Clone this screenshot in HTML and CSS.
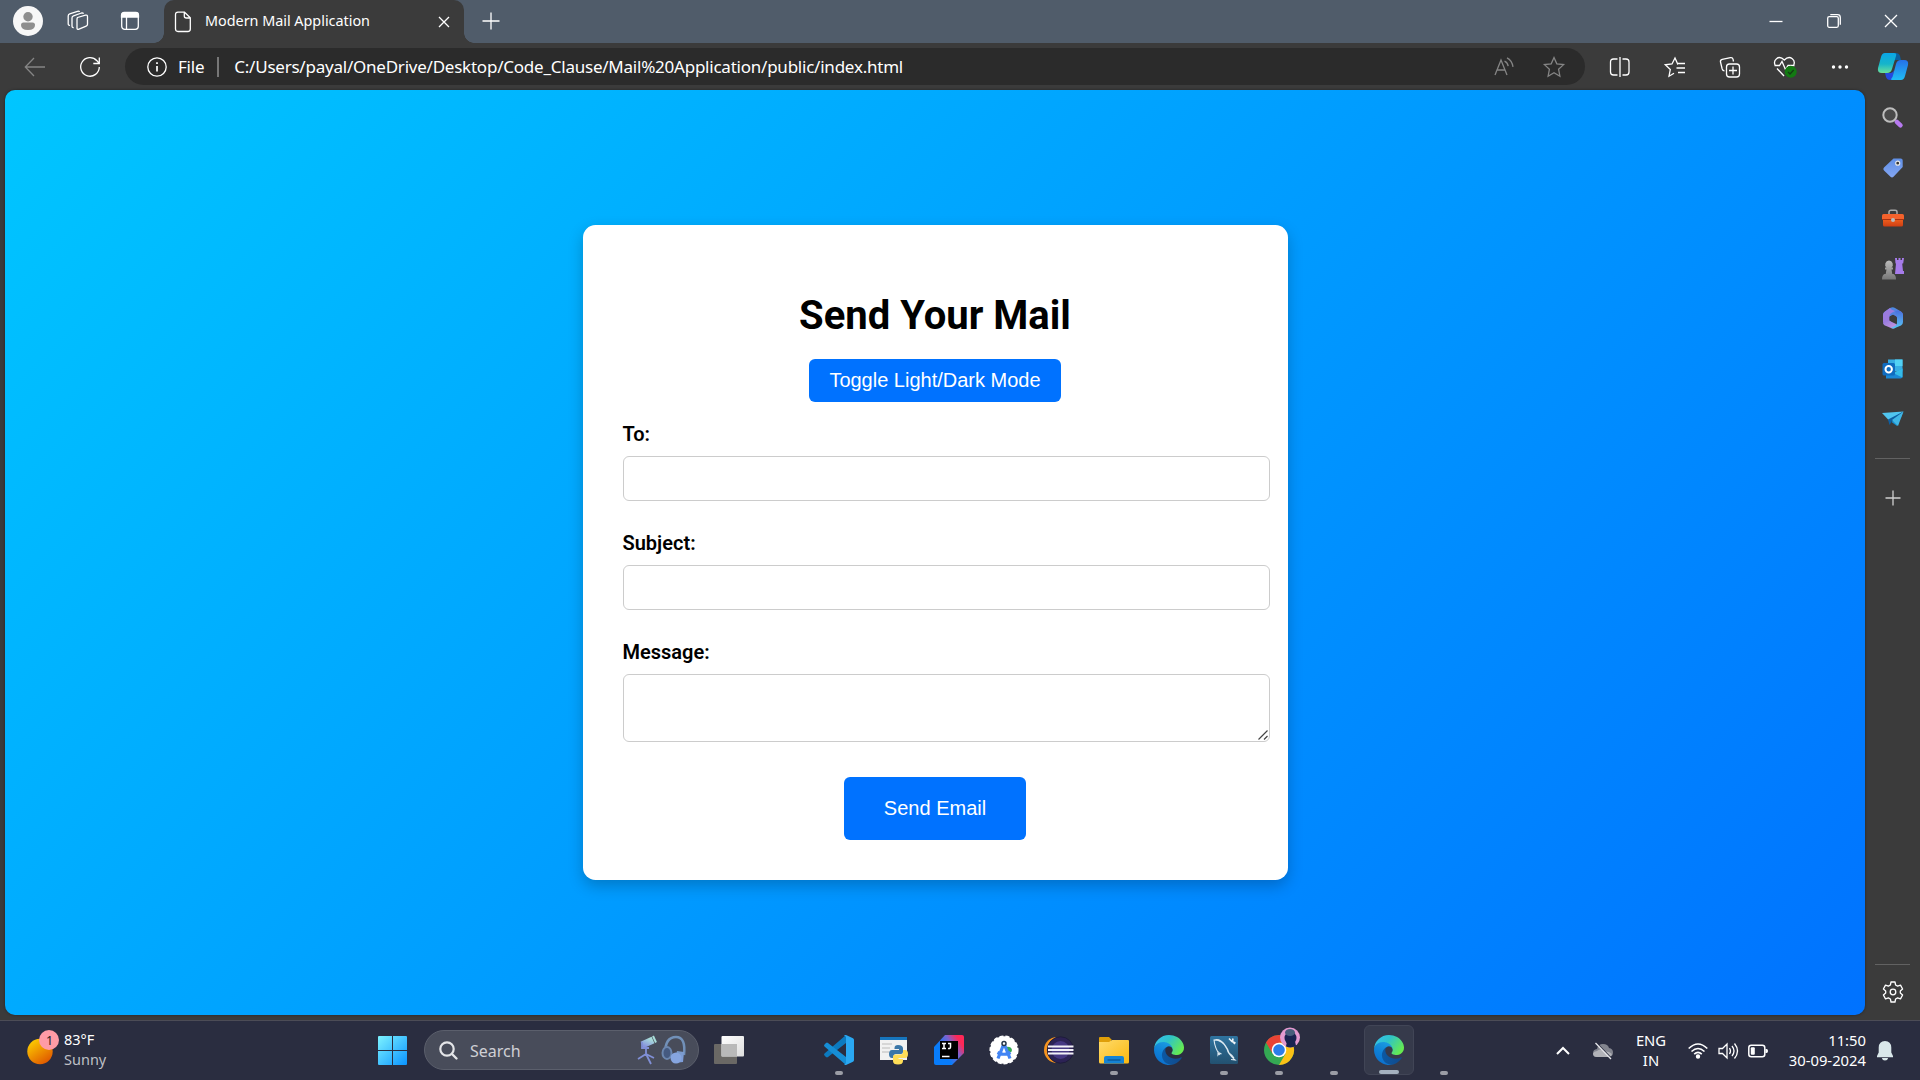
FILE: index.html
```html
<!DOCTYPE html>
<html lang="en">
<head>
<meta charset="utf-8">
<title>Modern Mail Application</title>
<link rel="stylesheet" href="styles.css">
</head>
<body>
<svg class="defs" width="0" height="0" aria-hidden="true">
  <defs>
    <linearGradient id="edgeA" x1="0" y1="0" x2="1" y2="0"><stop offset="0" stop-color="#0c59a4"/><stop offset="1" stop-color="#114a8b"/></linearGradient>
    <linearGradient id="edgeB" x1=".6" y1="0" x2=".2" y2="1"><stop offset="0" stop-color="#1b9de2"/><stop offset=".5" stop-color="#0f80d6"/><stop offset="1" stop-color="#0b6ccb"/></linearGradient>
    <linearGradient id="edgeC" x1="0" y1=".1" x2="1" y2=".6"><stop offset="0" stop-color="#35c1f1"/><stop offset=".45" stop-color="#2fc3c8"/><stop offset="1" stop-color="#66eb4f"/></linearGradient>
    <linearGradient id="win" x1="0" y1="0" x2="1" y2="1"><stop offset="0" stop-color="#7df3ff"/><stop offset="1" stop-color="#0a93ff"/></linearGradient>
    <linearGradient id="sun" x1=".1" y1="0" x2=".8" y2="1"><stop offset="0" stop-color="#ffd500"/><stop offset="1" stop-color="#de5200"/></linearGradient>
    <linearGradient id="idea" x1="0" y1=".75" x2="1" y2=".1"><stop offset=".3" stop-color="#087cfa"/><stop offset=".62" stop-color="#7a63d0"/><stop offset=".85" stop-color="#fe2857"/></linearGradient>
    <linearGradient id="folder" x1="0" y1="0" x2="1" y2="1"><stop offset="0" stop-color="#ffdb6b"/><stop offset="1" stop-color="#fbb80f"/></linearGradient>
    <linearGradient id="copA" x1="0" y1="0" x2="0" y2="1"><stop offset="0" stop-color="#0aa5e6"/><stop offset=".55" stop-color="#16b5ca"/><stop offset="1" stop-color="#6be09a"/></linearGradient>
    <linearGradient id="copB" x1="0" y1="0" x2="0" y2="1"><stop offset="0" stop-color="#2670e8"/><stop offset="1" stop-color="#20bdf5"/></linearGradient>
    <linearGradient id="m365" x1="0" y1="0" x2="1" y2="1"><stop offset="0" stop-color="#3f8fe0"/><stop offset="1" stop-color="#6a74e0"/></linearGradient>
    <linearGradient id="m365b" x1="0" y1="0" x2="1" y2="1"><stop offset="0" stop-color="#8f7ae0"/><stop offset="1" stop-color="#cf97dc"/></linearGradient>
    <linearGradient id="m365c" x1="0" y1="0" x2="0" y2="1"><stop offset="0" stop-color="#4a6fdd"/><stop offset="1" stop-color="#58c4f5"/></linearGradient>
    <linearGradient id="tag" x1="0" y1="0" x2="0" y2="1"><stop offset="0" stop-color="#5f8fe6"/><stop offset="1" stop-color="#84a6f2"/></linearGradient>
    <linearGradient id="box" x1="0" y1="0" x2="0" y2="1"><stop offset="0" stop-color="#f66a23"/><stop offset="1" stop-color="#cf3e12"/></linearGradient>
    <linearGradient id="pawn" x1="0" y1="0" x2="0" y2="1"><stop offset="0" stop-color="#bbb"/><stop offset="1" stop-color="#777"/></linearGradient>
    <linearGradient id="dolphin" x1="0" y1="0" x2="0" y2="1"><stop offset="0" stop-color="#2f74a0"/><stop offset="1" stop-color="#235170"/></linearGradient>
    <linearGradient id="paneFront" x1="0" y1="0" x2="1" y2="1"><stop offset="0" stop-color="#fff"/><stop offset="1" stop-color="#ddd"/></linearGradient>
    <linearGradient id="mic" x1="0" y1="1" x2="1" y2="0"><stop offset="0" stop-color="#8793dd"/><stop offset="1" stop-color="#a8ddd9"/></linearGradient>
    <linearGradient id="phones" x1="0" y1="0" x2="1" y2="1"><stop offset="0" stop-color="#7797bd"/><stop offset="1" stop-color="#7f9fe0"/></linearGradient>
    <symbol id="edge" viewBox="0 0 256 256">
      <path fill="url(#edgeA)" transform="translate(-4.6 -4.9)" d="M235.68 195.46a93.73 93.73 0 01-10.54 4.71 101.87 101.87 0 01-35.9 6.46c-47.32 0-88.54-32.55-88.54-74.32A31.48 31.48 0 01117.13 105c-42.8 1.8-53.8 46.4-53.8 72.53 0 73.88 68.09 81.37 82.76 81.37 7.91 0 19.84-2.3 27-4.56l1.31-.44a128.34 128.34 0 0066.6-52.8 4 4 0 00-5.32-5.64z"/>
      <path fill="url(#edgeB)" d="M105.73 241.42A79.2 79.2 0 0183 220.08a80.72 80.72 0 0129.53-120c3.12-1.47 8.45-4.13 15.54-4a32.35 32.35 0 0125.69 13 31.88 31.88 0 016.36 18.66c0-.21 24.46-79.6-80-79.6-43.9 0-80 41.66-80 78.21a130.15 130.15 0 0012.11 56 128 128 0 00156.38 67.11 75.55 75.55 0 01-62.78-8z"/>
      <path fill="url(#edgeC)" d="M152.33 148.86c-.81 1.05-3.3 2.5-3.3 5.66 0 2.61 1.7 5.12 4.72 7.23 14.38 10 41.49 8.68 41.56 8.68a59.56 59.56 0 0030.27-8.35A61.38 61.38 0 00256 109.06c.26-22.41-8-37.31-11.34-43.91C223.46 23.67 177.72 0 128 0A128 128 0 000 126.2c.48-36.54 36.8-66.05 80-66.05 3.5 0 23.46.34 42 10.07 16.34 8.58 24.9 18.94 30.85 29.21 6.18 10.67 7.28 24.15 7.28 29.52s-2.74 13.33-7.8 19.91z"/>
    </symbol>
  </defs>
</svg>

<div class="desktop">
  <header class="tabstrip">
    <span class="slot avatar"><svg width="30" height="30" viewBox="0 0 30 30"><circle cx="15" cy="15" r="15" fill="#f7f7f7"/><circle cx="15" cy="10.700" r="4.700" fill="#8e8e8e"/><path d="M8 19q0-2.500 2.500-2.500h9q2.500 0 2.500 2.500 0 5-7 5t-7-5z" fill="#8e8e8e"/></svg></span>
    <span class="slot spaces"><svg width="22" height="22" viewBox="0 0 22 22" class="line"><path d="M10.500 7.500l8-2.300q2-.5 2 1.500v7.600q0 1.400-1.300 1.900l-7.200 3q-2 .8-2-1.200v-8.300q0-1.700.5-2.200zM6.700 17.500q-1.700.3-1.700-1.500V8q0-1.700 1.500-2.200L14.500 3q1.500-.4 2 .8M3 15.300q-1.800.3-1.800-1.500V6q0-1.700 1.500-2.200L10.500 1.300q1.600-.5 2 .7"/></svg></span>
    <span class="slot actions"><svg width="20" height="20" viewBox="0 0 20 20" class="line"><rect x="1.700" y="1.700" width="16.600" height="16.600" rx="3"/><path d="M6.500 6v12"/><path d="M1.500 6V4.200Q1.500 1.500 4.200 1.500h11.600q2.700 0 2.700 2.700V6z" fill="#fff"/></svg></span>
    <div class="tab">
      <svg class="doc line" width="18" height="22" viewBox="0 0 18 22"><path d="M4 1.200h6.500l5.800 5.600V18q0 2.500-2.500 2.500H4q-2.500 0-2.500-2.500V3.700Q1.500 1.200 4 1.200zM10.300 1.200V5q0 2 2 2h4"/></svg>
      <span class="tab-title">Modern Mail Application</span>
      <svg class="line" width="12" height="12" viewBox="0 0 12 12"><path d="M1 1l10 10M11 1L1 11"/></svg>
    </div>
    <span class="slot newtab"><svg width="18" height="18" viewBox="0 0 18 18" class="line"><path d="M9 .5v17M.5 9h17"/></svg></span>
    <div class="window-buttons">
      <span><svg width="14" height="14" viewBox="0 0 14 14" class="line"><path d="M.5 7.500h13"/></svg></span>
      <span><svg width="14" height="14" viewBox="0 0 14 14" class="line"><rect x=".7" y="2.700" width="10.600" height="10.600" rx="1.500"/><path d="M3.300.7h7.200q2.800 0 2.800 2.800v7.200"/></svg></span>
      <span><svg width="14" height="14" viewBox="0 0 14 14" class="line"><path d="M1 1l12 12M13 1L1 13"/></svg></span>
    </div>
  </header>

  <nav class="toolbar">
    <span class="slot back"><svg width="22" height="20" viewBox="0 0 22 20" class="line dim"><path d="M21 10H1.500M10 1L1.300 10l8.700 9"/></svg></span>
    <span class="slot reload"><svg width="22" height="22" viewBox="0 0 22 22" class="line"><path d="M20.300 11a9.300 9.300 0 1 1-2.400-6.300L20 7.200M20.300 1.500v6h-6"/></svg></span>
    <div class="address">
      <svg class="line" width="20" height="20" viewBox="0 0 20 20"><circle cx="10" cy="10" r="9.200"/><path d="M10 9v5.500M10 5.300v1.700" stroke-width="1.700"/></svg>
      <span class="scheme">File</span>
      <span class="bar"></span>
      <span class="url">C:/Users/payal/OneDrive/Desktop/Code_Clause/Mail%20Application/public/index.html</span>
      <svg class="line dim read" width="20" height="20" viewBox="0 0 20 20"><path d="M1 18L7 3l6 15M3.200 13h7.600M10.500 4.200q3 1.200 3.700 5M13 .8q5 2.500 6 9"/></svg>
      <svg class="line dim" width="22" height="22" viewBox="0 0 22 22"><path d="M11 1.500l2.800 6.300 6.800.8-5 4.700 1.300 6.900L11 16.800l-5.900 3.400 1.300-6.900-5-4.700 6.800-.8z"/></svg>
    </div>
    <div class="tools">
      <span><svg width="22" height="22" viewBox="0 0 22 22" class="line"><path d="M8.500 3H4.500Q1.500 3 1.500 6v10q0 3 3 3h4M13.500 3h3.500q3 0 3 3v10q0 3-3 3h-3.500M11 1v20"/></svg></span>
      <span><svg width="22" height="22" viewBox="0 0 22 22" class="line"><path d="M14 8h-.3L11 2 8 8l-6.700.8 5 4.700L5 20.200l5-2.900M14 7.500h7M12.500 12h8.500M14 16.500h7"/></svg></span>
      <span><svg width="22" height="22" viewBox="0 0 22 22" class="line"><rect x="7.500" y="8" width="13" height="13" rx="3"/><path d="M14 10.500v8M10 14.500h8M14.500 5.500l-.5-2.300q-.5-2-2.500-1.600L3.200 3.400Q1 4 1.500 6l1.700 7q.5 1.800 2.300 1.800"/></svg></span>
      <span><svg width="24" height="22" viewBox="0 0 24 22" class="line"><path d="M1.500 9.500h5l2.500-4 3.500 8 2.500-4h6.500M2 9q-1.500-4 1.500-6.300Q7-.2 11.300 4q4.200-4.200 8-1.300 3 2.300 1.500 6.300M4 12.500l7 7.500"/><circle cx="17.700" cy="15.800" r="6" fill="#127a12" stroke="none"/><path d="M15 16l2 2 3.700-4" stroke="#143c14"/></svg></span>
      <span><svg width="18" height="6" viewBox="0 0 18 6" fill="#fff"><circle cx="2.500" cy="3" r="1.700"/><circle cx="9" cy="3" r="1.700"/><circle cx="15.500" cy="3" r="1.700"/></svg></span>
      <span class="copilot"><svg width="30" height="28" viewBox="0 0 30 28"><path d="M15 0h3q3 0 4 3l1 4h-5q-3 0-4 3z" fill="#0b5f9e"/><path d="M15 27h-3q-3 0-4-3l-1-4h5q3 0 4-3z" fill="#2449df"/><path d="M7 0h9q3 0 2 3l-4 13q-1 4-5 4H4q-5 0-4-5L3 4q1-4 4-4z" fill="url(#copA)"/><path d="M23 27h-9q-2 0 .5-3L18 11q1-4 5-4h3q5 0 4 5l-3 11q-1 4-4 4z" fill="url(#copB)"/></svg></span>
    </div>
  </nav>

  <div class="middle">
    <main class="page">
      <section class="card">
        <h1>Send Your Mail</h1>
        <button class="btn toggle" type="button">Toggle Light/Dark Mode</button>
        <form class="form">
          <label for="to">To:</label>
          <input id="to" type="text">
          <label for="subject">Subject:</label>
          <input id="subject" type="text">
          <label for="message">Message:</label>
          <div class="message">
            <textarea id="message"></textarea>
            <svg class="grip" width="10" height="10" viewBox="0 0 10 10"><path d="M.5 9.500l9-9M6 9.500L9.500 6" stroke="#444" stroke-width="1.200"/></svg>
          </div>
        </form>
        <button class="btn send" type="button">Send Email</button>
      </section>
    </main>
    <aside class="sidebar">
      <span><svg width="22" height="22" viewBox="0 0 22 22"><path d="M14.800 14.800l3.700 3.500" stroke="#b77af0" stroke-width="4.500" stroke-linecap="round"/><circle cx="8" cy="8" r="6.700" fill="#494949" stroke="#bdbdbd" stroke-width="2"/></svg></span>
      <span><svg width="22" height="22" viewBox="0 0 22 22"><path d="M11.500 1.500h7.200q2 0 2 2v6.500l-9.200 9.700q-1.500 1.500-3 0L2 13.500q-1.500-1.500 0-3z" fill="url(#tag)"/><circle cx="15.700" cy="6.200" r="2" fill="#333" stroke="#e8e8e8" stroke-width="1.200"/></svg></span>
      <span><svg width="22" height="22" viewBox="0 0 22 22"><path d="M7 7.500V5q0-1.700 2-1.700h4q2 0 2 1.700v2.500" fill="none" stroke="#aaa" stroke-width="1.500"/><rect x="1" y="10" width="20" height="9.500" rx="1.500" fill="url(#box)"/><rect y="7" width="22" height="6" rx="1.500" fill="#f4622c"/><path d="M0 12.500h22" stroke="#aa310e"/><circle cx="11" cy="13" r="2" fill="#bbb"/></svg></span>
      <span><svg width="22" height="22" viewBox="0 0 22 22"><path d="M13 0h2v2h1.500V0h2v2H20V0h2l-.8 5.500h-1L21 13h1v3h-9l1-10.500h-.5z" fill="#a67bea"/><path d="M7 2.500a4 4 0 0 1 2.500 7H11v2H9.500l.8 4.500h1.200q2.500 1 2.500 5.500H0Q0 17 2.500 16h1.200l.8-4.500H3v-2h1.500a4 4 0 0 1 2.500-7z" fill="url(#pawn)"/></svg></span>
      <span><svg width="22" height="22" viewBox="0 0 22 22"><g transform="translate(0 -1)"><path d="M8 1q3-1.600 5 0l6 3.500q2 1.200 2 3.500v6l-10-6-3.500 1.800L1 14V8q0-2.400 2-3.600z" fill="url(#m365)"/><path d="M8 1L3 4.400Q1 5.600 1 8v7q0 2.500 2 3.500l4.500-3V9q0-2 2-3L13 4Q9 3 8 1z" fill="#9b7bdf"/><path d="M3 18.500Q1.500 17.500 1.200 16l6.300-2.500 3.500 2 4 2L13 21q-2 1.200-4 0z" fill="url(#m365b)"/><path d="M21 8v7q0 2.500-2 3.600L13 21q-2 1-4-.2l4-1.800q2-1 2-3V9.500l-2-5 3-1 3 1.200Q21 6 21 8z" fill="url(#m365c)"/><path d="M11 7.700l3.300 1.900v3.800L11 15.300l-3.300-1.900V9.600z" fill="#3b3b3b"/></g></svg></span>
      <span><svg width="22" height="22" viewBox="0 0 22 22"><path d="M6 1.500h14.500v12H6z" fill="#37aee5"/><path d="M13 1.500h7.500V8H13z" fill="#52d2f5"/><path d="M4 20.500V12l8 3 8.500-4.500v8q0 2-2 2z" fill="#1a88d6"/><path d="M20.500 10.500v9L11 15z" fill="#35bce9"/><rect x=".5" y="5" width="12.500" height="12.500" rx="1.500" fill="#0f6cc0"/><circle cx="6.700" cy="11.200" r="3.200" fill="none" stroke="#fff" stroke-width="2"/></svg></span>
      <span><svg width="22" height="22" viewBox="0 0 22 22"><path d="M0 5l21.500-1.500L7 12.500z" fill="#50c5ef"/><path d="M21.500 3.500L15 18l-5.500-4z" fill="#168fd1"/><path d="M6 11.500L21.500 3.500 10 13l-2.500 4z" fill="#0d5fa3"/><path d="M10 12l11.500-8.500L16 18z" fill="#40b6e5"/></svg></span>
      <i class="rule"></i>
      <span class="plus"><svg width="16" height="16" viewBox="0 0 16 16" class="line soft"><path d="M8 .5v15M.5 8h15"/></svg></span>
      <i class="rule low"></i>
      <span class="gear"><svg width="22" height="22" viewBox="0 0 22 22" class="line" stroke-linejoin="round"><path d="M9 1h4l.6 3 2 1.100 2.900-1L20.600 8l-2.300 2v2l2.300 2-2.100 3.900-2.900-1-2 1.100L13 21H9l-.6-3-2-1.100-2.900 1L1.400 14l2.300-2v-2L1.400 8l2.100-3.900 2.900 1 2-1.100z"/><circle cx="11" cy="11" r="2.800"/></svg></span>
    </aside>
  </div>

  <footer class="taskbar">
    <div class="weather">
      <svg width="34" height="36" viewBox="0 0 34 36"><circle cx="13" cy="22.500" r="12.700" fill="url(#sun)"/><circle cx="22" cy="11" r="10" fill="#ff9ba6"/><text x="22.500" y="15.500" class="badge">1</text></svg>
      <div class="lines"><b>83°F</b><span>Sunny</span></div>
    </div>
    <svg class="start" width="29" height="29" viewBox="0 0 29 29"><path fill="url(#win)" d="M1 0h13v14H0V1q0-1 1-1zM15 0h13q1 0 1 1v13H15zM0 15h14v14H1q-1 0-1-1zM15 15h14v13q0 1-1 1H15z"/></svg>
    <div class="search">
      <svg width="19" height="19" viewBox="0 0 19 19"><circle cx="8" cy="8" r="6.700" fill="none" stroke="#e4e5e8" stroke-width="2.200"/><path d="M13 13l4.500 4.500" stroke="#e4e5e8" stroke-width="2.400" stroke-linecap="round"/></svg>
      <span>Search</span>
      <svg width="48" height="30" viewBox="0 0 48 30"><path d="M5 10L16 5" stroke="url(#mic)" stroke-width="7"/><path d="M16 1l3 6.500" stroke="#a8ddd9" stroke-width="2"/><path d="M5 7v6h7M9 12v9M9 19l-8 5M9 19l8 4M9 19l5 10" fill="none" stroke="#808fd6" stroke-width="1.800"/><path d="M28 19q0-17 11-17 10 0 8 18" fill="none" stroke="#7190b8" stroke-width="2.500"/><ellipse cx="30" cy="18" rx="4.500" ry="6" fill="#455a80" stroke="#6b86ae" stroke-width="2"/><path d="M40 16l7 1-1 10-9 1z" fill="url(#phones)"/><circle cx="39" cy="23" r="5.500" fill="#86a5df"/></svg>
    </div>
    <svg class="views" width="30" height="28" viewBox="0 0 30 28"><rect y="8" width="23" height="20" rx="1" fill="#6a6865"/><rect x="7.500" width="22.500" height="20.500" rx="1" fill="url(#paneFront)"/><path d="M7.500 8H23v12.500H7.500z" fill="#b9b9b9"/></svg>
    <div class="apps">
      <span class="app run"><svg width="30" height="30" viewBox="0 0 30 30"><path d="M22 0v8L4 22q-1 .8-2 0l-1.500-1.500q-1-1 0-2z" fill="#0c7abf"/><path d="M22 30v-8L4 8q-1-.8-2 0L.5 9.500q-1 1 0 2z" fill="#168ed6"/><path d="M22 0l7 3.200q1 .6 1 1.800v20q0 1.200-1 1.800L22 30q-1.500.3-2-1 1.500.5 2-1V2q-.5-1.500-2-1 .5-1.200 2-1z" fill="#2aa8f2"/></svg></span>
      <span class="app"><svg width="30" height="30" viewBox="0 0 30 30"><path d="M1 2h27v23H1z" fill="#f1f1f1"/><path d="M1 2h27v3H1z" fill="#1675bd"/><path d="M3 9h10M3 13h8M3 17h7" stroke="#bbb"/><path d="M19 10q5 0 5 3.500V17q0 2-2 2h-5q-2.500 0-2.500 2.500V23H13q-3 0-3-4t3-4h7v-1h-4.500v-1q0-3 3.500-3z" fill="#3b77a8"/><path d="M24 15h2q3 0 3 4t-3 4h-6.500v1h4.500v2q0 3.500-5 3.500t-5-3.500v-4q0-2.500 2.500-2.500h5q2.500 0 2.500-2.500z" fill="#ffde57"/></svg></span>
      <span class="app"><svg width="30" height="30" viewBox="0 0 30 30"><path d="M0 12L11 0h17q2 0 2 2v16L18 30H2q-2 0-2-2z" fill="url(#idea)"/><path d="M6 6h18v18H6z" fill="#000"/><path d="M8 8.500h4M10 8.500v5M8 13.500h4M14 8.500h2.500v3.500q0 2-2.500 1.500M8 21.500h7.500" fill="none" stroke="#fff" stroke-width="1.500"/></svg></span>
      <span class="app"><svg width="30" height="30" viewBox="0 0 30 30"><circle cx="15" cy="15" r="13.800" fill="#fff" stroke="#fff" stroke-width="1.500" stroke-dasharray="4 2"/><path d="M17 12q5-1 6 3 0 2-2 2.500l-2.500-.5z" fill="#34a853"/><path d="M15 8.500L9 23.500M15 8.500l6 15M8.500 17.500q6.500 3.500 13 0" fill="none" stroke="#4285f4" stroke-width="3.200"/><circle cx="15" cy="8.500" r="2" fill="#fff" stroke="#26374b" stroke-width="1.500"/></svg></span>
      <span class="app"><svg width="30" height="30" viewBox="0 0 30 30"><circle cx="13" cy="15" r="13" fill="#f7941e"/><circle cx="16.500" cy="15" r="13.200" fill="#2c2255" stroke="#1e1d3a"/><circle cx="16.500" cy="15" r="9" fill="#463783"/><path d="M4 11.500h25.500M4 15h25.500M4 18.500h25.500" stroke="#f3f1f8" stroke-width="2.100"/></svg></span>
      <span class="app run"><svg width="30" height="30" viewBox="0 0 30 30"><path d="M0 3q0-1 1-1h9l3 3h-1v7H0z" fill="#df9f09"/><path d="M0 7h10l3-2h16q1 0 1 1v21q0 1.500-1.500 1.500h-27Q0 28.500 0 27z" fill="url(#folder)"/><path d="M5 28.500V23q0-2 2-2h16q2 0 2 2v5.500z" fill="#1583d4"/><path d="M8.500 25h13" stroke="#0a5595" stroke-width="1.300"/></svg></span>
      <span class="app"><svg width="30" height="30"><use href="#edge"/></svg></span>
      <span class="app run"><svg width="30" height="30" viewBox="0 0 30 30"><rect x="1" y="1" width="28" height="28" rx="1.500" fill="url(#dolphin)"/><path d="M11 20q-5-6-6-15 9 0 13 9 1 5 8 11l-4-.5M5 5q6-2 11 5 3 4 4 8 4 3 5 5M9 16v4l1.500-2 2 1" fill="none" stroke="#dce9f1" stroke-width="1.100"/><path d="M20 3.500l3 3 3.500 1.500M24 3.500l-.5 3L26 9" fill="none" stroke="#eef4f8" stroke-width="1.600"/></svg></span>
      <span class="app run"><svg class="tall" width="38" height="38" viewBox="0 0 38 38"><circle cx="15" cy="23" r="15" fill="#34a853"/><path d="M2 15.500A15 15 0 0 1 28 15.500L15 16l-6.500 10.500z" fill="#ea4335"/><path d="M28 15.500A15 15 0 0 1 15 38l6.500-11.300L15 15.500z" fill="#fbc116"/><circle cx="15" cy="23" r="7.300" fill="#fff"/><circle cx="15" cy="23" r="5.800" fill="#2b7de9"/><circle cx="26" cy="10.500" r="10" fill="#e39ad0"/><ellipse cx="26.500" cy="11" rx="6" ry="6.500" fill="#1a2350"/><path d="M23 14h8l1 5q-5 2.500-10 .500z" fill="#1a2350"/><ellipse cx="26" cy="5.500" rx="5" ry="3.500" fill="#485e7c"/></svg></span>
      <span class="app run"></span>
      <span class="app active"><svg width="30" height="30"><use href="#edge"/></svg></span>
      <span class="app run"></span>
    </div>
    <div class="tray">
      <span class="t-chev"><svg width="14" height="9" viewBox="0 0 14 9"><path d="M1 8l6-6 6 6" fill="none" stroke="#fff" stroke-width="2"/></svg></span>
      <span class="t-cloud"><svg width="22" height="18" viewBox="0 0 22 18"><path d="M5 15q-4 0-4-4 0-3.500 4-4 1-5 6-5 5 0 6 4 4 .5 4 4.500T17 15z" fill="#83858f"/><path d="M5 15q-4 0-4-3.500Q2 9 5 9q3-3 6 0l6 1 3 2q-1 3-3 3z" fill="#b1b2b8"/><path d="M4.500 1L20 17" stroke="#2a2d40" stroke-width="1.500"/><path d="M3.500 1L19 17" stroke="#e8e8ec" stroke-width="1.300"/></svg></span>
      <span class="t-lang">ENG<br>IN</span>
      <span class="t-icon"><svg width="20" height="16" viewBox="0 0 20 16" class="line bold"><path d="M.7 5.500q9.300-9 18.600 0M3.500 8.500q6.500-6 13 0M6.200 11.200q3.800-3.500 7.600 0"/><circle cx="10" cy="13.500" r="1.400" fill="#fff"/></svg></span>
      <span class="t-icon"><svg width="20" height="18" viewBox="0 0 20 18" class="line"><path d="M1 6.500h3.500L9 2v14l-4.500-4.500H1zM11.500 6q2 3 0 6M14 4q4 5 0 10M16.500 1.500q6 7.500 0 15"/></svg></span>
      <span class="t-icon"><svg width="20" height="14" viewBox="0 0 20 14"><rect x=".8" y="1.300" width="16" height="11.400" rx="2.500" fill="none" stroke="#fff" stroke-width="1.500"/><rect x="2.800" y="3.300" width="4" height="7.400" rx="1" fill="#fff"/><path d="M17.500 5h1q1.500 0 1.500 2t-1.500 2h-1z" fill="#fff"/></svg></span>
      <span class="t-clock"><span>11:50</span><span>30-09-2024</span></span>
      <span class="t-bell"><svg width="16" height="20" viewBox="0 0 16 20"><path d="M8 0q6 0 6.300 6.500v5L16 15v1.200H0V15l1.700-3.500v-5Q2 0 8 0zM4.800 17h6.400Q10.500 19.500 8 19.500T4.800 17z" fill="#d9e7ea"/></svg></span>
    </div>
  </footer>
</div>
</body>
</html>
```
FILE: styles.css
```css
* { box-sizing: border-box; }
body {
  margin: 0;
  overflow: hidden;
  background: #3b3b3b;
  color: #fff;
  font-family: "Noto Sans", "Open Sans", sans-serif;
}
.defs { position: absolute; }
svg { display: block; flex: none; overflow: visible; }
.line { fill: none; stroke: #fff; stroke-width: 1.3; }
.dim { stroke: #858585; }
.soft { stroke: #d0d0d0; }
.bold { stroke-width: 1.6; }
.desktop { display: flex; flex-direction: column; width: 1920px; height: 1080px; }
.slot { display: flex; flex: none; align-items: center; justify-content: center; }

/* Tab strip */
.tabstrip { display: flex; height: 43px; background: #505c6a; }
.tabstrip .slot { width: 50px; height: 42px; }
.tabstrip .avatar { width: 56px; }
.tabstrip .spaces { width: 43px; }
.tabstrip .actions { width: 62px; }
.tab {
  position: relative;
  display: flex;
  align-items: center;
  width: 300px;
  margin-left: 3px;
  padding: 0 14px 0 10px;
  border-radius: 10px 10px 0 0;
  background: #3b3b3b;
}
.tab::before, .tab::after {
  content: "";
  position: absolute;
  bottom: 0;
  width: 10px;
  height: 10px;
}
.tab::before { left: -10px; background: radial-gradient(circle at 0 0, transparent 9.500px, #3b3b3b 10px); }
.tab::after { right: -10px; background: radial-gradient(circle at 100% 0, transparent 9.500px, #3b3b3b 10px); }
.tab-title { flex: 1; padding: 0 0 2px 13px; font-size: 14.400px; letter-spacing: -.02px; white-space: nowrap; }
.tabstrip .newtab { width: 53px; }
.window-buttons { display: flex; height: 42px; margin-left: auto; }
.window-buttons span { display: flex; width: 57.500px; align-items: center; justify-content: center; }

/* Toolbar */
.toolbar { display: flex; height: 47px; align-items: center; background: #3b3b3b; }
.toolbar .back { width: 70px; }
.toolbar .reload { width: 40px; }
.address {
  display: flex;
  flex: none;
  align-items: center;
  width: 1460px;
  height: 37px;
  margin-left: 15px;
  padding: 0 20px 0 22px;
  border-radius: 19px;
  background: #2b2b2b;
  font-size: 17px;
  letter-spacing: -.23px;
  white-space: nowrap;
}
.scheme { padding-left: 11px; }
.bar { width: 2px; height: 20px; margin: 0 15px 0 13px; background: #777; }
.address .url, .scheme { padding-bottom: 1px; }
.read { margin: 0 29px 0 auto; }
.tools { display: flex; flex: none; padding-left: 7px; }
.tools span { display: flex; width: 55px; height: 30px; align-items: center; justify-content: center; }
.tools .copilot { width: 52px; }

/* Web page and sidebar */
.middle { display: flex; flex: 1; min-height: 0; padding-left: 5px; }
.page {
  display: flex;
  align-items: flex-start;
  justify-content: center;
  width: 1860px;
  height: 925px;
  padding-top: 135px;
  border-radius: 10px;
  background: linear-gradient(135deg, #00c6ff, #0072ff);
  box-shadow: 0 0 3px rgba(0, 0, 0, .4);
  color: #000;
  font-family: Roboto, sans-serif;
}
.card {
  display: flex;
  flex-direction: column;
  align-items: center;
  width: 705px;
  height: 655px;
  padding: 67px 40px 40px;
  border-radius: 12.500px;
  background: #fff;
  box-shadow: 0 6px 15px rgba(0, 0, 0, .22);
}
.card h1 { margin: 0; font-size: 40px; font-weight: 700; line-height: 47px; white-space: nowrap; }
.btn { padding: 0; border: 0; border-radius: 6px; background: #0072ff; color: #fff; font: 20px "Liberation Sans", sans-serif; }
.toggle { width: 252px; height: 43px; margin-top: 20px; }
.send { width: 182px; height: 63px; margin-top: auto; }
.form { display: flex; flex-direction: column; width: 100%; }
.form label { height: 24px; margin: 20px 0 10px; font-size: 20px; font-weight: 600; line-height: 24px; }
.form input, .form textarea {
  display: block;
  width: 647px;
  height: 45px;
  margin: 0 0 10px;
  border: 1px solid #ccc;
  border-radius: 6px;
  background: #fff;
}
.message { position: relative; width: 647px; }
.form textarea { height: 68px; margin: 0; resize: none; }
.grip { position: absolute; right: 2px; bottom: 2px; }
.sidebar { display: flex; flex-direction: column; align-items: center; width: 55px; height: 925px; padding-top: 3px; }
.sidebar span { display: flex; height: 50.200px; flex: none; align-items: center; justify-content: center; }
.rule { width: 35px; height: 1px; flex: none; margin-top: 14px; background: #626262; }
.sidebar .plus { margin-top: 14px; }
.sidebar .low { margin-top: auto; }
.sidebar .gear { height: 50px; padding-top: 4px; }

/* Taskbar */
.taskbar { display: flex; height: 60px; flex: none; align-items: center; padding-bottom: 1px; border-top: 1px solid #4c4c56; background: #2a2d40; }
.weather { display: flex; width: 378px; padding: 0 0 3px 27px; }
.weather .lines { display: flex; flex-direction: column; padding-left: 3px; font-size: 14.500px; line-height: 20px; }
.weather b { font-weight: 400; }
.weather span { color: #bfc0c6; }
.badge { fill: #222; font-size: 12.500px; text-anchor: middle; }
.search {
  display: flex;
  align-items: center;
  width: 275px;
  height: 40px;
  margin: 0 15px 0 17px;
  padding: 0 13px 0 14px;
  border: 1px solid #5b5f6c;
  border-radius: 20px;
  background: #484c5a;
  color: #cfd0d5;
  font-size: 16px;
}
.search span { flex: 1; padding: 1px 0 0 12px; }
.apps { display: flex; margin-left: 67.500px; }
.app { position: relative; display: flex; width: 55px; height: 50px; align-items: center; justify-content: center; }
.app.run::after, .app.active::after {
  content: "";
  position: absolute;
  bottom: 0;
  left: 23.500px;
  width: 8px;
  height: 4px;
  border-radius: 2px;
  background: #9b9da6;
}
.app.active { width: 50px; margin: 0 3px 0 2px; border: 1px solid #414556; border-radius: 6px; background: #363a4b; }
.app.active::after { bottom: 0; left: 14px; width: 20px; background: #a5b1bf; }
.tall { margin: -8px -8px 0 0; }
.tray { display: flex; flex: 1; align-items: center; justify-content: flex-end; padding: 1px 27px 0 0; font-size: 14.800px; line-height: 20px; }
.tray > span { display: flex; justify-content: center; }
.t-chev { width: 40px; }
.t-cloud { width: 40px; }
.tray .t-lang { width: 60px; padding: 0 4px 1px 0; text-align: center; }
.t-icon { width: 30px; }
.tray .t-clock { flex-direction: column; width: 93px; padding-bottom: 2px; white-space: nowrap; align-items: flex-end; }
.t-bell { margin-left: 11px; }
```
